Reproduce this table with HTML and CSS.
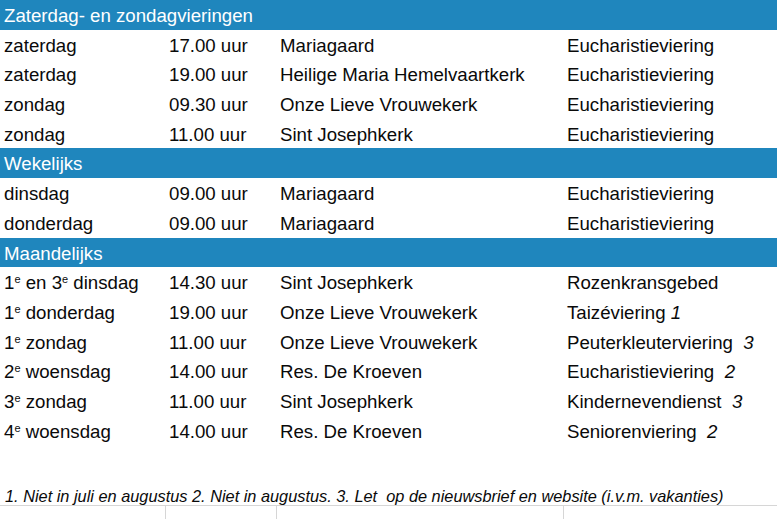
FILE: index.html
```html
<!DOCTYPE html>
<html lang="nl">
<head>
<meta charset="utf-8">
<title>Vieringen</title>
<link rel="stylesheet" href="styles.css">
</head>
<body>
<div class="sheet">
  <div class="band">Zaterdag- en zondagvieringen</div>

  <div class="cell">zaterdag</div><div class="cell">17.00 uur</div><div class="cell">Mariagaard</div><div class="cell">Eucharistieviering</div>
  <div class="cell">zaterdag</div><div class="cell">19.00 uur</div><div class="cell">Heilige Maria Hemelvaartkerk</div><div class="cell">Eucharistieviering</div>
  <div class="cell">zondag</div><div class="cell">09.30 uur</div><div class="cell">Onze Lieve Vrouwekerk</div><div class="cell">Eucharistieviering</div>
  <div class="cell">zondag</div><div class="cell">11.00 uur</div><div class="cell">Sint Josephkerk</div><div class="cell">Eucharistieviering</div>

  <div class="band">Wekelijks</div>

  <div class="cell">dinsdag</div><div class="cell">09.00 uur</div><div class="cell">Mariagaard</div><div class="cell">Eucharistieviering</div>
  <div class="cell">donderdag</div><div class="cell">09.00 uur</div><div class="cell">Mariagaard</div><div class="cell">Eucharistieviering</div>

  <div class="band">Maandelijks</div>

  <div class="cell">1<sup class="ord">e</sup> en 3<sup class="ord">e</sup> dinsdag</div><div class="cell">14.30 uur</div><div class="cell">Sint Josephkerk</div><div class="cell">Rozenkransgebed</div>
  <div class="cell">1<sup class="ord">e</sup> donderdag</div><div class="cell">19.00 uur</div><div class="cell">Onze Lieve Vrouwekerk</div><div class="cell">Taizéviering <i class="note">1</i></div>
  <div class="cell">1<sup class="ord">e</sup> zondag</div><div class="cell">11.00 uur</div><div class="cell">Onze Lieve Vrouwekerk</div><div class="cell">Peuterkleuterviering&nbsp; <i class="note">3</i></div>
  <div class="cell">2<sup class="ord">e</sup> woensdag</div><div class="cell">14.00 uur</div><div class="cell">Res. De Kroeven</div><div class="cell">Eucharistieviering&nbsp; <i class="note">2</i></div>
  <div class="cell">3<sup class="ord">e</sup> zondag</div><div class="cell">11.00 uur</div><div class="cell">Sint Josephkerk</div><div class="cell">Kindernevendienst&nbsp; <i class="note">3</i></div>
  <div class="cell">4<sup class="ord">e</sup> woensdag</div><div class="cell">14.00 uur</div><div class="cell">Res. De Kroeven</div><div class="cell">Seniorenviering&nbsp; <i class="note">2</i></div>

  <div class="blank"></div>

  <div class="footnote">1. Niet in juli en augustus 2. Niet in augustus. 3. Let  op de nieuwsbrief en website (i.v.m. vakanties)</div>

  <div class="grid-cell"></div><div class="grid-cell sep"></div><div class="grid-cell sep"></div><div class="grid-cell sep"></div>
</div>
</body>
</html>
```

FILE: styles.css
```css
html, body {
  margin: 0;
  padding: 0;
  background: #ffffff;
}

body {
  width: 777px;
  height: 519px;
  overflow: hidden;
  font-family: "Liberation Sans", Arial, sans-serif;
  color: #0a0a0a;
}

.sheet {
  display: grid;
  grid-template-columns: 165px 111px 287px 214px;
  grid-auto-rows: 29.7px;
}

.cell {
  padding-left: 4px;
  padding-top: 1px;
  font-size: 18.67px;
  line-height: 29.7px;
  white-space: nowrap;
}

.band {
  grid-column: 1 / -1;
  padding-left: 4px;
  padding-top: 1px;
  line-height: 29.7px;
  background: #1f86bd;
  color: #ffffff;
  font-size: 18.67px;
}

.ord {
  font-size: 11px;
  vertical-align: 6px;
  line-height: 0;
}

.note {
  font-style: italic;
}

.blank {
  grid-column: 1 / -1;
}

.footnote {
  grid-column: 1 / -1;
  align-self: end;
  padding-left: 5px;
  font-size: 16.33px;
  font-style: italic;
  white-space: pre;
  line-height: 18px;
  padding-bottom: 0;
}

.grid-cell {
  border-top: 1px solid #d6d6d6;
}

.grid-cell.sep {
  border-left: 1px solid #d6d6d6;
}
```
